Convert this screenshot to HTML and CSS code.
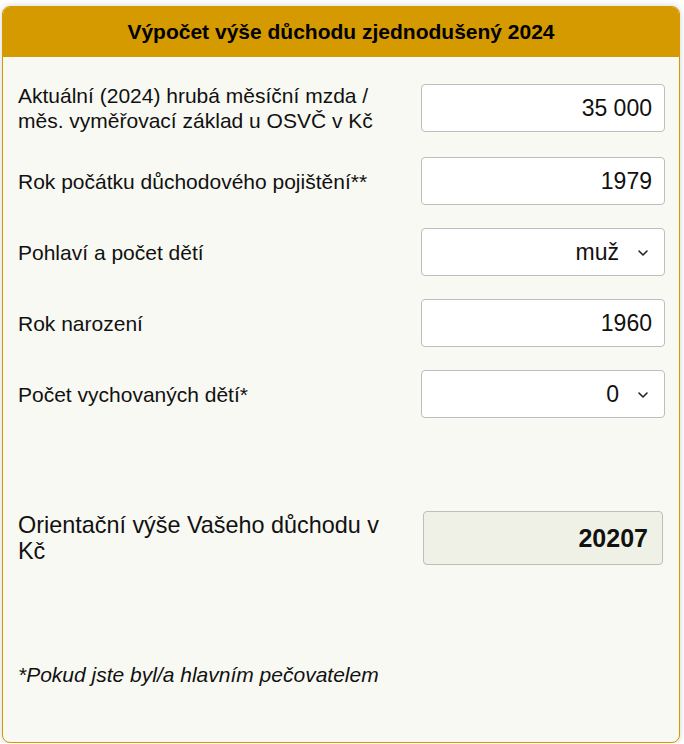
FILE: index.html
```html
<!DOCTYPE html>
<html lang="cs">
<head>
<meta charset="utf-8">
<title>Výpočet výše důchodu zjednodušený 2024</title>
<link rel="stylesheet" href="styles.css">
</head>
<body>
<div class="card">
  <div class="card-header">Výpočet výše důchodu zjednodušený 2024</div>
  <div class="card-body">
    <div class="rows">
      <div class="row row-tall">
        <label class="label" for="mzda">Aktuální (2024) hrubá měsíční mzda / měs. vyměřovací základ u OSVČ v Kč</label>
        <input class="field" id="mzda" type="text" value="35 000">
      </div>
      <div class="row">
        <label class="label" for="pocatek">Rok počátku důchodového pojištění**</label>
        <input class="field" id="pocatek" type="text" value="1979">
      </div>
      <div class="row">
        <label class="label" for="pohlavi">Pohlaví a počet dětí</label>
        <div class="select-wrap">
          <select class="field select" id="pohlavi">
            <option>muž</option>
            <option>žena</option>
          </select>
          <svg class="chevron" width="10" height="6" viewBox="0 0 10 6"><path d="M1 1 L5 5 L9 1" fill="none" stroke="#222" stroke-width="1.6" stroke-linecap="round" stroke-linejoin="round"/></svg>
        </div>
      </div>
      <div class="row">
        <label class="label" for="narozeni">Rok narození</label>
        <input class="field" id="narozeni" type="text" value="1960">
      </div>
      <div class="row">
        <label class="label" for="deti">Počet vychovaných dětí*</label>
        <div class="select-wrap">
          <select class="field select" id="deti">
            <option>0</option>
            <option>1</option>
            <option>2</option>
          </select>
          <svg class="chevron" width="10" height="6" viewBox="0 0 10 6"><path d="M1 1 L5 5 L9 1" fill="none" stroke="#222" stroke-width="1.6" stroke-linecap="round" stroke-linejoin="round"/></svg>
        </div>
      </div>
    </div>
    <div class="result-row">
      <div class="result-label">Orientační výše Vašeho důchodu v Kč</div>
      <div class="result-box">20207</div>
    </div>
    <p class="note">*Pokud jste byl/a hlavním pečovatelem</p>
  </div>
</div>
</body>
</html>
```

FILE: styles.css
```css
html, body {
  margin: 0;
  padding: 0;
  background: #ffffff;
}

body {
  font-family: "Liberation Sans", Arial, sans-serif;
  color: #111;
  padding: 6px 4px 0 2px;
}

.card {
  border: 1px solid #d49a00;
  border-radius: 8px;
  overflow: hidden;
  background: #f9f9f4;
  box-shadow: 0 0 6px rgba(0, 0, 0, 0.18);
  height: 737px;
  box-sizing: border-box;
}

.card-header {
  background: #d49a00;
  height: 50px;
  display: flex;
  align-items: center;
  justify-content: center;
  font-weight: bold;
  font-size: 21px;
  color: #000;
}

.card-body {
  padding: 25px 14px 0 15px;
}

.rows {
  display: flex;
  flex-direction: column;
  gap: 23px;
}

.row {
  display: flex;
  align-items: center;
  justify-content: space-between;
  min-height: 48px;
}

.row-tall {
  min-height: 52px;
}

.label {
  font-size: 21px;
  line-height: 25px;
  color: #111;
  max-width: 385px;
}

.field {
  box-sizing: border-box;
  width: 244px;
  height: 48px;
  border: 1px solid #bdbdbd;
  border-radius: 4px;
  background: #ffffff;
  font-family: "Liberation Sans", Arial, sans-serif;
  font-size: 23px;
  color: #111;
  text-align: right;
  padding: 0 12px;
  margin: 0;
  outline: none;
}

.select-wrap {
  position: relative;
  width: 244px;
  height: 48px;
}

.select {
  -webkit-appearance: none;
  appearance: none;
  text-align-last: right;
  padding-right: 45px;
}

.chevron {
  position: absolute;
  right: 17px;
  top: 22px;
  pointer-events: none;
}

.result-row {
  display: flex;
  align-items: center;
  justify-content: space-between;
  margin-top: 93px;
}

.result-label {
  font-size: 23.4px;
  line-height: 26px;
  max-width: 380px;
  color: #111;
}

.result-box {
  box-sizing: border-box;
  width: 240px;
  height: 54px;
  margin-right: 2px;
  border: 1px solid #bdbdbd;
  border-radius: 4px;
  background: #f0f1e6;
  display: flex;
  align-items: center;
  justify-content: flex-end;
  padding-right: 14px;
  font-weight: bold;
  font-size: 25px;
  color: #111;
}

.note {
  margin: 98px 0 0;
  font-style: italic;
  font-size: 21px;
  line-height: 24px;
  color: #111;
}
```
